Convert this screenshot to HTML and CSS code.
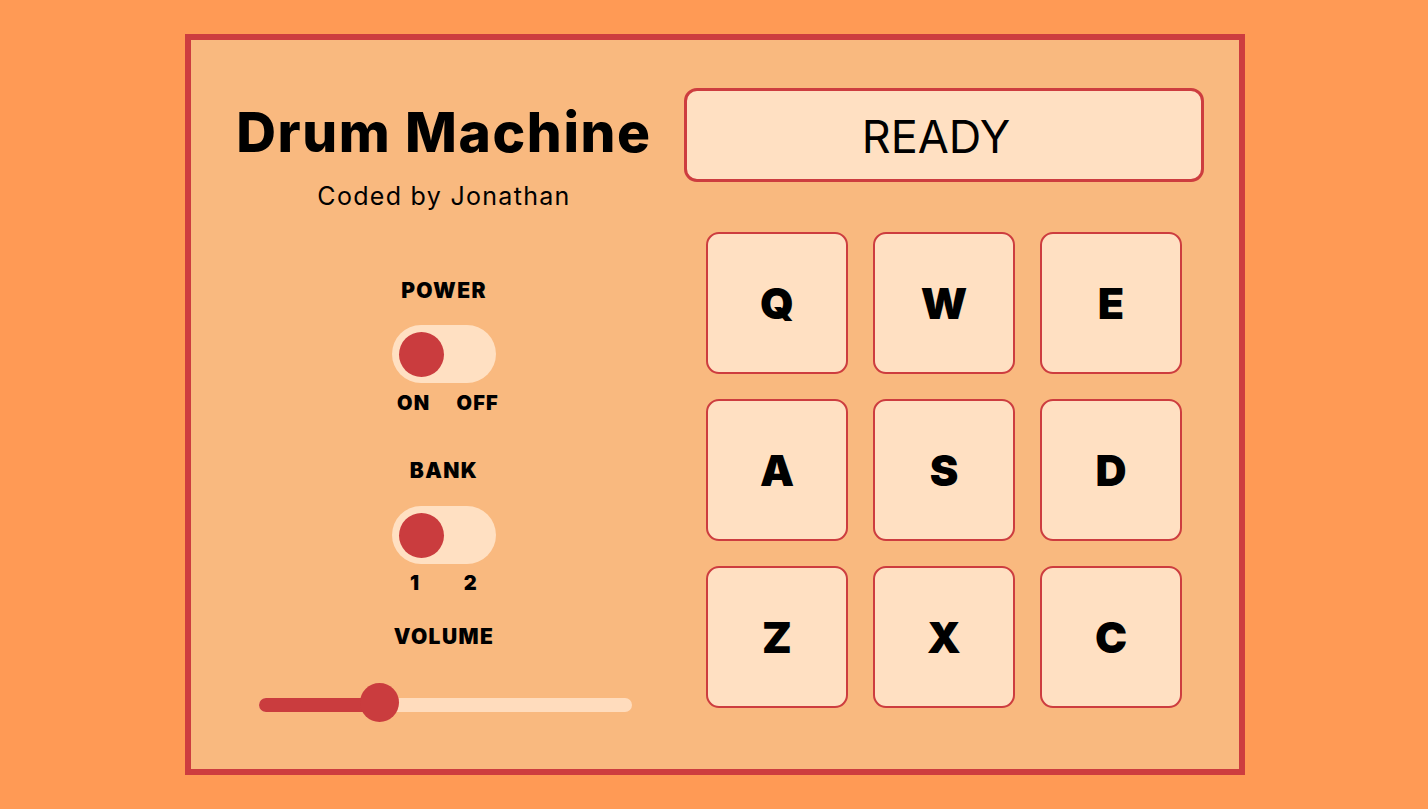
FILE: index.html
```html
<!DOCTYPE html>
<html lang="en">
<head>
<meta charset="utf-8">
<title>Drum Machine</title>
<link rel="stylesheet" href="styles.css">
</head>
<body>
<div class="page">
  <main class="machine">
    <section class="controls">
      <h1 class="title">Drum Machine</h1>
      <p class="byline">Coded by Jonathan</p>

      <div class="label power-label">POWER</div>
      <div class="toggle"><span class="knob"></span></div>
      <div class="toggle-labels"><span>ON</span><span>OFF</span></div>

      <div class="label bank-label">BANK</div>
      <div class="toggle toggle-bank"><span class="knob"></span></div>
      <div class="toggle-labels bank-labels"><span>1</span><span>2</span></div>

      <div class="label volume-label">VOLUME</div>
      <div class="slider">
        <div class="track">
          <div class="fill" style="width: 120px"></div>
        </div>
        <span class="thumb" style="left: 101px"></span>
      </div>
    </section>

    <section class="board">
      <div class="display">READY</div>
      <div class="pads">
        <button class="pad">Q</button>
        <button class="pad">W</button>
        <button class="pad">E</button>
        <button class="pad">A</button>
        <button class="pad">S</button>
        <button class="pad">D</button>
        <button class="pad">Z</button>
        <button class="pad">X</button>
        <button class="pad">C</button>
      </div>
    </section>
  </main>
</div>
</body>
</html>
```

FILE: styles.css
```css
* { box-sizing: border-box; }

html, body {
  margin: 0;
  padding: 0;
  height: 100%;
}

body {
  background: #ff9a55;
  font-family: Inter, "Noto Sans", sans-serif;
  color: #000;
}

.page {
  height: 809px;
  display: flex;
  align-items: center;
  justify-content: center;
  padding-left: 2px;
}

.machine {
  width: 1060px;
  height: 741px;
  border: 6px solid #cd3d3f;
  background: #f9b97f;
  display: flex;
  padding: 48px 35px 0 33px;
  gap: 20px;
}

.controls {
  width: 440px;
  display: flex;
  flex-direction: column;
  align-items: center;
}

.title {
  margin: 12px 0 0;
  font-size: 55px;
  line-height: 64px;
  font-weight: 800;
  letter-spacing: 1.6px;
  white-space: nowrap;
}

.byline {
  margin: 16px 0 0;
  font-size: 25px;
  line-height: 32px;
  font-weight: 400;
  letter-spacing: 1.3px;
}

.label {
  font-size: 21px;
  line-height: 24px;
  font-weight: 900;
  letter-spacing: 1.4px;
}

.power-label { margin-top: 67px; }
.bank-label { margin-top: 44px; }
.volume-label { margin-top: 30px; }

.toggle {
  margin-top: 22px;
  width: 104px;
  height: 58px;
  border-radius: 29px;
  background: #ffe0c2;
  padding: 7px;
  display: flex;
  align-items: flex-start;
}

.toggle-bank { margin-top: 23px; }

.knob {
  width: 45px;
  height: 45px;
  border-radius: 50%;
  background: #ca3c3e;
}

.toggle-labels {
  margin-top: 8px;
  margin-left: 8px;
  width: 102px;
  display: flex;
  justify-content: space-between;
  font-size: 20px;
  line-height: 24px;
  font-weight: 900;
  letter-spacing: 1.2px;
}

.bank-labels {
  margin-top: 7px;
  margin-left: 0;
  width: 76px;
  padding: 0 4px;
}

.slider {
  margin-top: 34px;
  width: 373px;
  height: 40px;
  position: relative;
  display: flex;
  align-items: center;
  margin-left: 3px;
}

.track {
  width: 100%;
  height: 14px;
  border-radius: 7px;
  background: #ffdcbd;
  overflow: hidden;
  margin-top: 3px;
}

.fill {
  height: 100%;
  background: #ca3c3e;
}

.thumb {
  position: absolute;
  top: 0;
  width: 39px;
  height: 39px;
  border-radius: 50%;
  background: #ca3c3e;
}

.board {
  width: 520px;
  display: flex;
  flex-direction: column;
  align-items: center;
}

.display {
  width: 520px;
  height: 94px;
  border: 3px solid #cd3d3f;
  border-radius: 13px;
  background: #ffe0c2;
  display: flex;
  align-items: center;
  justify-content: center;
  font-size: 45px;
  font-weight: 400;
  padding: 2px 16px 0 0;
}

.pads {
  margin-top: 50px;
  display: grid;
  grid-template-columns: repeat(3, 142px);
  grid-auto-rows: 142px;
  gap: 25px;
}

.pad {
  border: 2px solid #cd3d3f;
  border-radius: 13px;
  background: #ffe0c2;
  font-family: Inter, "Noto Sans", sans-serif;
  font-size: 43px;
  font-weight: 900;
  color: #000;
  padding: 0;
  cursor: pointer;
}
```
